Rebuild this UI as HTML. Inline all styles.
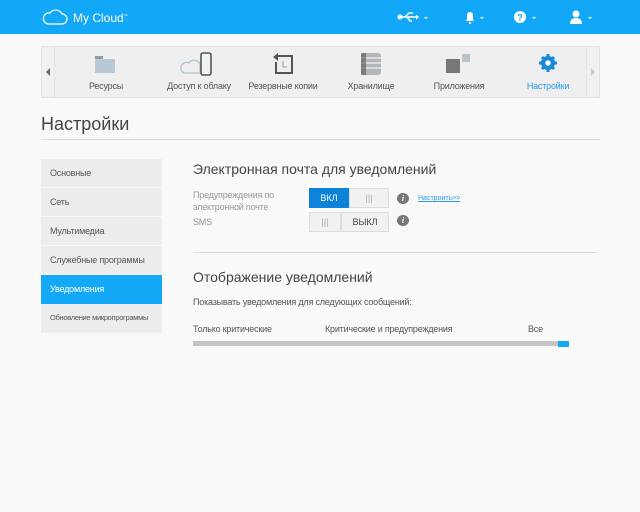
<!DOCTYPE html><html><head><meta charset="utf-8"><style>
*{margin:0;padding:0;box-sizing:border-box}
body{width:640px;height:512px;background:#f9f9f9;font-family:"Liberation Sans",sans-serif;position:relative;overflow:hidden;color:#555}
.a{position:absolute}
.hdr{left:0;top:0;width:640px;height:34px;background:#12a8f7}
.nav{left:41px;top:46px;width:559px;height:52px;background:#efefef;border:1px solid #e2e2e2}
.ni{position:absolute;top:34px;font-size:9px;color:#555;text-align:center;width:90px;white-space:nowrap;letter-spacing:-0.2px}
.side{left:41px;width:121px;height:28px;background:#ededed;font-size:9px;color:#555;padding-left:9px;line-height:28px;white-space:nowrap;letter-spacing:-0.2px}
.tg{position:absolute;height:20px;border:1px solid #ddd;background:#f1f1f1;font-size:9px;text-align:center;line-height:18px;color:#444}
.inf{position:absolute;width:12px;height:11px;border-radius:50%;background:#777;color:#fff;font:italic bold 8px "Liberation Serif",serif;text-align:center;line-height:11px}
.t9{font-size:9px;letter-spacing:-0.2px;white-space:nowrap}
</style></head><body>
<div class="a hdr"></div>
<svg class="a" style="left:42px;top:8px" width="26" height="18"><path d="M6 16 H20 A5 5 0 0 0 20 6 A7 7 0 0 0 8 5 A5.5 5.5 0 0 0 6 16Z" fill="none" stroke="#fff" stroke-width="1.2"/></svg>
<div class="a" style="left:73px;top:11px;color:#fff;font-size:12px">My Cloud<sup style="font-size:4px">™</sup></div>
<svg class="a" style="left:397px;top:12px" width="36" height="12"><circle cx="3" cy="5" r="2.5" fill="#fff"/><path d="M3 5H19M8 5L12 1H16M10 5L13 9H15" stroke="#fff" stroke-width="1.5" fill="none"/><path d="M19 2.5L22 5L19 7.5Z" fill="#fff"/><path d="M27 5L29 7L31 5" fill="#fff"/></svg>
<svg class="a" style="left:461px;top:10px" width="26" height="15"><path d="M5 11H13L12 9V5A3 3 0 0 0 6 5V9Z" fill="#fff"/><rect x="8" y="12" width="2" height="2" fill="#fff"/><path d="M19 7L21 9L23 7Z" fill="#fff"/></svg>
<svg class="a" style="left:513px;top:10px" width="26" height="15"><circle cx="7" cy="7" r="6" fill="#fff"/><text x="7" y="10.5" font-size="9" font-weight="bold" fill="#12a8f7" text-anchor="middle" font-family="Liberation Sans">?</text><path d="M19 7L21 9L23 7Z" fill="#fff"/></svg>
<svg class="a" style="left:569px;top:9px" width="26" height="16"><circle cx="7" cy="5" r="3.5" fill="#fff"/><path d="M1 15Q1 9 7 9Q13 9 13 15Z" fill="#fff"/><path d="M19 8L21 10L23 8Z" fill="#fff"/></svg>
<div class="a nav">
<div style="position:absolute;left:0;top:0;width:13px;height:50px;border-right:1px solid #e2e2e2;background:#f1f1f1"></div>
<div style="position:absolute;left:4px;top:21px;border:4px solid transparent;border-right:4px solid #666;border-left:0"></div>
<div style="position:absolute;right:0;top:0;width:13px;height:50px;border-left:1px solid #e2e2e2;background:#f1f1f1"></div>
<div style="position:absolute;right:4px;top:21px;border:4px solid transparent;border-left:4px solid #ccc;border-right:0"></div>
<svg style="position:absolute;left:52px;top:8px" width="22" height="18"><rect x="1" y="1" width="8" height="3" fill="#909ea8"/><rect x="1" y="4" width="20" height="14" fill="#b9c8d3"/></svg>
<div class="ni" style="left:19px">Ресурсы</div>
<svg style="position:absolute;left:138px;top:5px" width="34" height="24"><path d="M4 21H20V13A6 6 0 0 0 9 11A5 5 0 0 0 4 21Z" fill="none" stroke="#aac3d3" stroke-width="1.3"/><rect x="21" y="1" width="10" height="22" rx="2" fill="#f2f2f2" stroke="#555" stroke-width="1.6"/></svg>
<div class="ni" style="left:112px">Доступ к облаку</div>
<svg style="position:absolute;left:230px;top:6px" width="22" height="22"><path d="M6 3H20V20H4V9" fill="none" stroke="#555" stroke-width="2"/><path d="M1 4L6 0V8Z" fill="#555"/><path d="M11 8V14H15" stroke="#999" fill="none"/></svg>
<div class="ni" style="left:196px">Резервные копии</div>
<svg style="position:absolute;left:318px;top:5px" width="22" height="24"><rect x="1" y="1" width="20" height="22" rx="3" fill="#b0b6ba"/><path d="M1 6H21M1 11H21M1 16H21" stroke="#efefef" stroke-width="1.3"/><rect x="1" y="1" width="5" height="22" fill="#555" opacity=".6"/></svg>
<div class="ni" style="left:284px">Хранилище</div>
<svg style="position:absolute;left:404px;top:7px" width="26" height="20"><rect x="0" y="5" width="14" height="14" fill="#777"/><rect x="16" y="0" width="8" height="8" fill="#b8c4cc"/></svg>
<div class="ni" style="left:372px">Приложения</div>
<svg style="position:absolute;left:497px;top:7px" width="18" height="18"><circle cx="9" cy="9" r="7" fill="#1a8ad8"/><path d="M9 0V18M0 9H18M3 3L15 15M15 3L3 15" stroke="#1a8ad8" stroke-width="3"/><circle cx="9" cy="9" r="2.7" fill="#fff"/></svg>
<div class="ni" style="left:461px;color:#2b9ae8">Настройки</div>
</div>
<div class="a" style="left:41px;top:114px;font-size:18px;color:#444">Настройки</div>
<div class="a" style="left:41px;top:139px;width:559px;height:1px;background:#ddd"></div>
<div class="a side" style="top:159px">Основные</div>
<div class="a side" style="top:188px">Сеть</div>
<div class="a side" style="top:217px">Мультимедиа</div>
<div class="a side" style="top:246px">Служебные программы</div>
<div class="a side" style="top:275px;height:29px;background:#13a9f7;color:#fff">Уведомления</div>
<div class="a side" style="top:304px;height:29px;font-size:7.5px;letter-spacing:-0.3px">Обновление микропрограммы</div>
<div class="a" style="left:193px;top:161px;font-size:14px;color:#444">Электронная почта для уведомлений</div>
<div class="a t9" style="left:193px;top:189px;color:#999;line-height:12px">Предупреждения по<br>электронной почте</div>
<div class="a t9" style="left:193px;top:217px;color:#999">SMS</div>
<div class="tg" style="left:309px;top:188px;width:40px;background:#0c83d9;border-color:#0c83d9;color:#fff">ВКЛ</div>
<div class="tg" style="left:349px;top:188px;width:40px;color:#aaa">|||</div>
<div class="tg" style="left:309px;top:212px;width:32px;color:#aaa">|||</div>
<div class="tg" style="left:341px;top:212px;width:48px">ВЫКЛ</div>
<div class="inf" style="left:397px;top:193px">i</div>
<div class="inf" style="left:397px;top:215px">i</div>
<div class="a" style="left:418px;top:195px;font-size:7px;color:#2b9ae8;text-decoration:underline">Настроить&gt;&gt;</div>
<div class="a" style="left:193px;top:252px;width:404px;height:1px;background:#ddd"></div>
<div class="a" style="left:193px;top:269px;font-size:14px;color:#444">Отображение уведомлений</div>
<div class="a t9" style="left:193px;top:297px;color:#555">Показывать уведомления для следующих сообщений:</div>
<div class="a t9" style="left:193px;top:324px;color:#555">Только критические</div>
<div class="a t9" style="left:325px;top:324px;color:#555">Критические и предупреждения</div>
<div class="a t9" style="left:528px;top:324px;color:#555">Все</div>
<div class="a" style="left:193px;top:341px;width:376px;height:5px;background:#c5c5c5"></div>
<div class="a" style="left:558px;top:341px;width:11px;height:6px;background:#13a9f7"></div>
</body></html>
